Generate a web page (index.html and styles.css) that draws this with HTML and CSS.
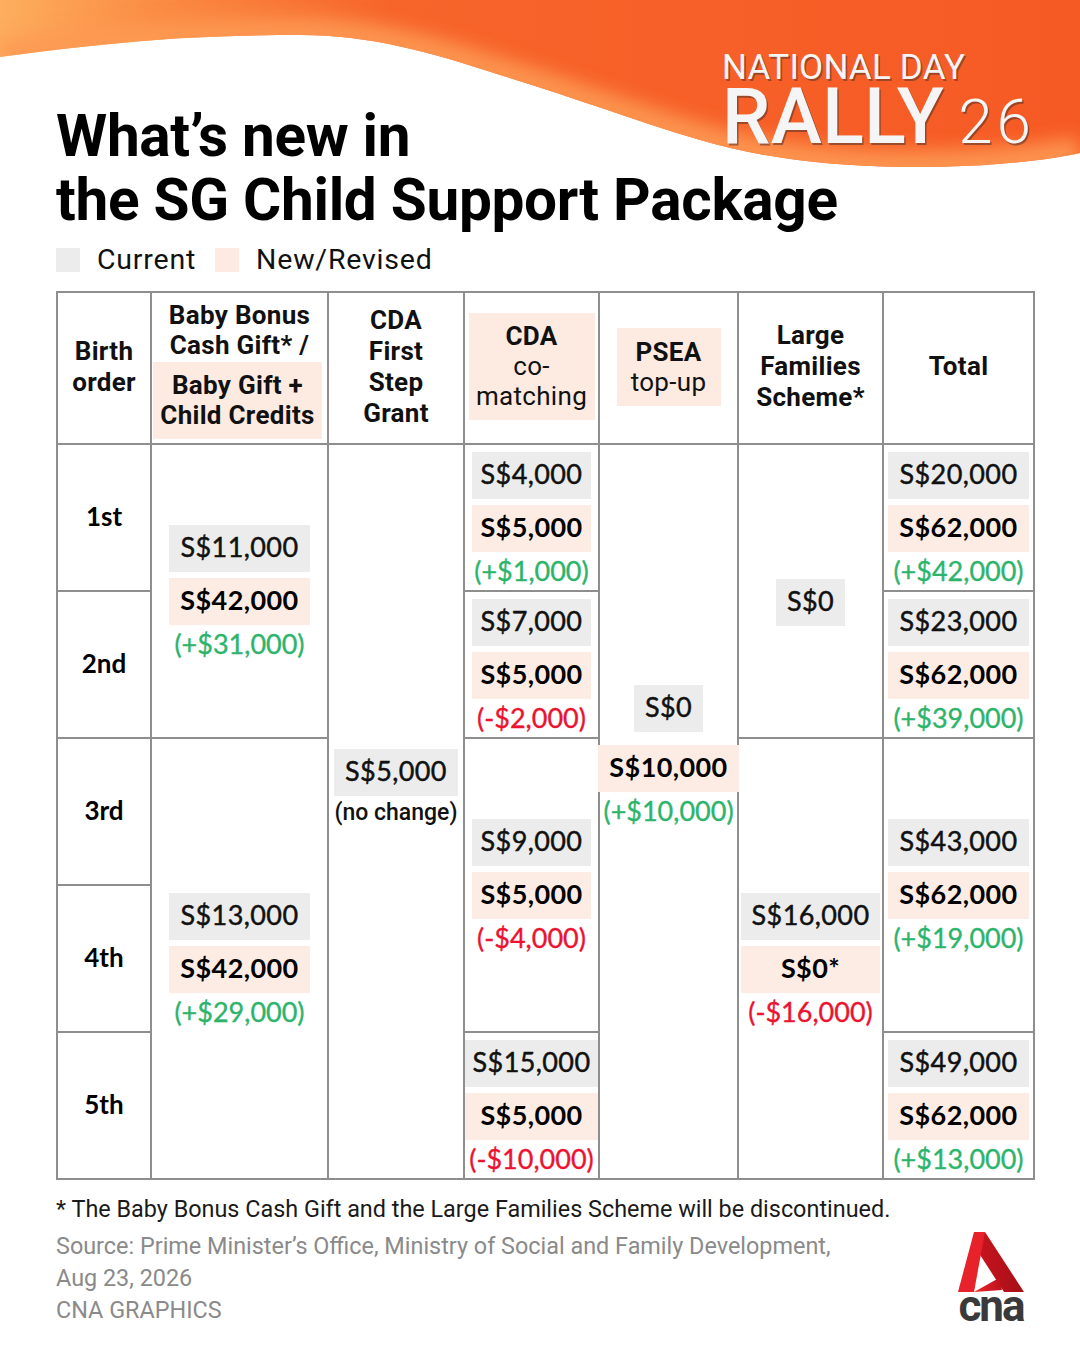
FILE: index.html
```html
<!DOCTYPE html>
<html lang="en">
<head>
<meta charset="utf-8">
<title>What’s new in the SG Child Support Package</title>
<link rel="stylesheet" href="styles.css">
</head>
<body>
<div class="page">
  <svg class="wave" width="1080" height="175" viewBox="0 0 1080 175" aria-hidden="true">
    <defs>
      <linearGradient id="gA" x1="0" y1="0" x2="1" y2="0">
        <stop offset="0" stop-color="#fdae5e"/>
        <stop offset="0.14" stop-color="#fb8d45"/>
        <stop offset="0.36" stop-color="#f7652b"/>
        <stop offset="1" stop-color="#f65a24"/>
      </linearGradient>
      <clipPath id="cw">
        <path d="M0,0 H1080 V153 C1040,162 970,168 900,167 C830,166 760,158 700,140 C630,119 570,96 500,75 C430,52 370,35 300,35 C230,35 160,38 100,45 C60,49 30,53 0,57 Z"/>
      </clipPath>
      <filter id="bl" x="-10%" y="-50%" width="120%" height="200%">
        <feGaussianBlur stdDeviation="9"/>
      </filter>
    </defs>
    <path d="M0,0 H1080 V153 C1040,162 970,168 900,167 C830,166 760,158 700,140 C630,119 570,96 500,75 C430,52 370,35 300,35 C230,35 160,38 100,45 C60,49 30,53 0,57 Z" fill="url(#gA)"/>
    <g clip-path="url(#cw)">
      <path d="M1080,153 C1040,162 970,168 900,167 C830,166 760,158 700,140 C630,119 570,96 500,75 C430,52 370,35 300,35 C230,35 160,38 100,45 C60,49 30,53 0,57" fill="none" stroke="#fd9a52" stroke-width="34" filter="url(#bl)" opacity="0.9"/>
    </g>
  </svg>

  <div class="ndr">
    <div class="ndr-top">NATIONAL DAY</div>
    <div class="ndr-row"><span class="ndr-rally">RALLY</span><span class="ndr-num">26</span></div>
  </div>

  <h1 class="title">What’s new in<br>the SG Child Support Package</h1>

  <div class="legend">
    <span class="sw sw-cur"></span><span class="lg-text">Current</span>
    <span class="sw sw-new"></span><span class="lg-text">New/Revised</span>
  </div>

  <div class="grid">
    <!-- header -->
    <div class="cell hd">Birth<br>order</div>
    <div class="cell hd hd-bb">
      <div>Baby Bonus<br>Cash Gift* /</div>
      <div class="hbox hbox-bb">Baby Gift +<br>Child Credits</div>
    </div>
    <div class="cell hd">CDA<br>First<br>Step<br>Grant</div>
    <div class="cell hd">
      <div class="hbox hbox-co">CDA<br><span class="reg">co-<br>matching</span></div>
    </div>
    <div class="cell hd">
      <div class="hbox hbox-psea">PSEA<br><span class="reg">top-up</span></div>
    </div>
    <div class="cell hd">Large<br>Families<br>Scheme*</div>
    <div class="cell hd">Total</div>

    <!-- birth order -->
    <div class="cell ord r1">1st</div>
    <div class="cell ord r2">2nd</div>
    <div class="cell ord r3">3rd</div>
    <div class="cell ord r4">4th</div>
    <div class="cell ord r5">5th</div>

    <!-- Baby bonus -->
    <div class="cell c2 r12">
      <div class="stack">
        <div class="pill cur">S$11,000</div>
        <div class="pill new">S$42,000</div>
        <div class="chg up">(+$31,000)</div>
      </div>
    </div>
    <div class="cell c2 r345">
      <div class="stack">
        <div class="pill cur">S$13,000</div>
        <div class="pill new">S$42,000</div>
        <div class="chg up">(+$29,000)</div>
      </div>
    </div>

    <!-- CDA first step -->
    <div class="cell c3 rall fsg">
      <div class="stack">
        <div class="pill cur">S$5,000</div>
        <div class="nochg">(no change)</div>
      </div>
    </div>

    <!-- CDA co-matching -->
    <div class="cell c4 r1">
      <div class="stack">
        <div class="pill cur">S$4,000</div>
        <div class="pill new">S$5,000</div>
        <div class="chg up">(+$1,000)</div>
      </div>
    </div>
    <div class="cell c4 r2">
      <div class="stack">
        <div class="pill cur">S$7,000</div>
        <div class="pill new">S$5,000</div>
        <div class="chg down">(-$2,000)</div>
      </div>
    </div>
    <div class="cell c4 r34">
      <div class="stack">
        <div class="pill cur">S$9,000</div>
        <div class="pill new">S$5,000</div>
        <div class="chg down">(-$4,000)</div>
      </div>
    </div>
    <div class="cell c4 r5">
      <div class="stack">
        <div class="pill cur">S$15,000</div>
        <div class="pill new">S$5,000</div>
        <div class="chg down">(-$10,000)</div>
      </div>
    </div>

    <!-- PSEA -->
    <div class="cell c5 rall psea">
      <div class="stack stack-c">
        <div class="pill cur">S$0</div>
        <div class="pill new">S$10,000</div>
        <div class="chg up">(+$10,000)</div>
      </div>
    </div>

    <!-- Large families -->
    <div class="cell c6 r12 lfs1">
      <div class="stack">
        <div class="pill cur">S$0</div>
      </div>
    </div>
    <div class="cell c6 r345">
      <div class="stack">
        <div class="pill cur">S$16,000</div>
        <div class="pill new">S$0*</div>
        <div class="chg down">(-$16,000)</div>
      </div>
    </div>

    <!-- Total -->
    <div class="cell c7 r1">
      <div class="stack">
        <div class="pill cur">S$20,000</div>
        <div class="pill new">S$62,000</div>
        <div class="chg up">(+$42,000)</div>
      </div>
    </div>
    <div class="cell c7 r2">
      <div class="stack">
        <div class="pill cur">S$23,000</div>
        <div class="pill new">S$62,000</div>
        <div class="chg up">(+$39,000)</div>
      </div>
    </div>
    <div class="cell c7 r34">
      <div class="stack">
        <div class="pill cur">S$43,000</div>
        <div class="pill new">S$62,000</div>
        <div class="chg up">(+$19,000)</div>
      </div>
    </div>
    <div class="cell c7 r5">
      <div class="stack">
        <div class="pill cur">S$49,000</div>
        <div class="pill new">S$62,000</div>
        <div class="chg up">(+$13,000)</div>
      </div>
    </div>
  </div>

  <footer class="foot">
    <div class="foot-text">
      <p class="note">* The Baby Bonus Cash Gift and the Large Families Scheme will be discontinued.</p>
      <p class="src">Source: Prime Minister’s Office, Ministry of Social and Family Development,<br>Aug 23, 2026<br>CNA GRAPHICS</p>
    </div>
    <div class="cna">
      <svg class="cna-a" width="66" height="60" viewBox="0 0 66 60" aria-hidden="true">
        <defs>
          <linearGradient id="rl" x1="0" y1="0" x2="1" y2="0">
            <stop offset="0" stop-color="#c8141d"/>
            <stop offset="1" stop-color="#a50f18"/>
          </linearGradient>
          <linearGradient id="rb" x1="0" y1="0" x2="1" y2="0">
            <stop offset="0" stop-color="#f0262e"/>
            <stop offset="1" stop-color="#b8121b"/>
          </linearGradient>
        </defs>
        <polygon points="19,0 27,0 66,60 46,60 21.5,22" fill="url(#rl)"/>
        <polygon points="0,60 16,0 27,0 16,60" fill="#e8222a"/>
        <polygon points="16,60 41,46 44,58" fill="url(#rb)"/>
      </svg>
      <div class="cna-word">cna</div>
    </div>
  </footer>
</div>
</body>
</html>
```

FILE: styles.css
```css
* { box-sizing: border-box; }

html, body {
  margin: 0;
  padding: 0;
  background: #ffffff;
}

.page {
  position: relative;
  width: 1080px;
  height: 1350px;
  padding: 0 45px 0 56px;
  overflow: hidden;
  font-family: Roboto, "Liberation Sans", sans-serif;
  color: #000;
}

.wave {
  position: absolute;
  left: 0;
  top: 0;
  display: block;
}

.ndr {
  position: absolute;
  left: 722px;
  top: 50px;
  color: #f5f5f5;
  font-family: Roboto, "Liberation Sans", sans-serif;
  text-shadow: 1.5px 1.5px 0 rgba(80, 50, 40, 0.55);
}

.ndr-top {
  font-size: 35px;
  line-height: 35px;
  font-weight: 400;
  letter-spacing: 0.2px;
}

.ndr-row {
  display: flex;
  align-items: baseline;
  margin-top: 2px;
  line-height: 60px;
}

.ndr-rally {
  font-size: 77px;
  font-weight: 500;
  letter-spacing: 0.4px;
}

.ndr-num {
  font-size: 62px;
  font-weight: 300;
  margin-left: 14px;
  letter-spacing: 4px;
}

.title {
  position: relative;
  margin: 104px 0 0 0;
  font-size: 58.5px;
  line-height: 64px;
  font-weight: 700;
  letter-spacing: -0.3px;
}

.legend {
  display: flex;
  align-items: center;
  height: 24px;
  margin-top: 16px;
}

.sw {
  width: 24px;
  height: 24px;
  display: block;
}

.sw-cur { background: #ececec; }
.sw-new { background: #fdebe1; margin-left: 19px; }

.lg-text {
  font-size: 28.5px;
  line-height: 24px;
  margin-left: 17px;
  letter-spacing: 0.8px;
  color: #111;
}

.grid {
  display: grid;
  grid-template-columns: 92px 175px 134px 133px 137px 143px 149px;
  grid-template-rows: 150px repeat(5, 145px);
  gap: 2px;
  padding: 2px;
  background: #8e8e8e;
  width: 979px;
  margin-top: 19px;
}

.cell {
  background: #fff;
  display: flex;
  align-items: center;
  justify-content: center;
  text-align: center;
  min-width: 0;
}

.hd {
  font-size: 26px;
  line-height: 31px;
  font-weight: 700;
  letter-spacing: 0.3px;
  color: #111;
  flex-direction: column;
  padding-bottom: 3px;
}

.hd-bb {
  justify-content: center;
  gap: 2px;
  line-height: 30px;
  padding-top: 2px;
  padding-bottom: 0;
}

.hbox {
  background: #fdebe1;
  line-height: 30px;
}

.hbox-bb {
  width: 169px;
  margin-left: -4px;
  padding: 8px 0 9px;
}

.hbox-co {
  width: 126px;
  padding: 8px 0 9px;
}

.hbox-psea {
  width: 104px;
  padding: 9px 0;
}

.reg { font-weight: 400; }

.ord {
  font-family: Lato, Roboto, sans-serif;
  font-size: 26px;
  font-weight: 700;
  grid-column: 1;
  padding-bottom: 4px;
}

.r1 { grid-row: 2; }
.r2 { grid-row: 3; }
.r3 { grid-row: 4; }
.r4 { grid-row: 5; }
.r5 { grid-row: 6; }
.r12 { grid-row: 2 / 4; }
.r34 { grid-row: 4 / 6; }
.r345 { grid-row: 4 / 7; }
.rall { grid-row: 2 / 7; }

.c2 { grid-column: 2; }
.c3 { grid-column: 3; }
.c4 { grid-column: 4; }
.c5 { grid-column: 5; }
.c6 { grid-column: 6; }
.c7 { grid-column: 7; }

.stack {
  display: inline-flex;
  flex-direction: column;
  align-items: stretch;
  gap: 6px;
  font-family: Lato, Roboto, sans-serif;
  font-size: 27px;
}

.stack-c {
  align-items: center;
  gap: 13px;
}

.stack-c .chg { margin-top: -7px; }

.pill {
  height: 47px;
  line-height: 43px;
  padding: 0 11px;
  letter-spacing: 0.4px;
  white-space: nowrap;
}

.c4 .pill { padding: 0 8px; }

.cur {
  background: #ececec;
  font-weight: 400;
  color: #111;
  -webkit-text-stroke: 0.45px #111;
}

.new {
  background: #fdece3;
  font-weight: 700;
  color: #000;
}

.chg {
  line-height: 26px;
  white-space: nowrap;
  letter-spacing: 0;
  -webkit-text-stroke: 0.35px currentColor;
}

.up { color: #2db46c; }
.down { color: #ec1331; }

.nochg {
  font-family: Roboto, sans-serif;
  font-size: 23px;
  font-weight: 500;
  letter-spacing: 0;
  line-height: 34px;
  margin-top: -6px;
  color: #111;
}

.fsg { padding-bottom: 44px; }
.psea { padding-bottom: 114px; }
.lfs1 { padding-top: 22px; }

.foot {
  display: flex;
  justify-content: space-between;
  align-items: flex-end;
  margin-top: 13px;
  padding-right: 11px;
}

.foot-text p {
  margin: 0;
  font-size: 23.4px;
  line-height: 32px;
}

.note { color: #1a1a1a; }

.src {
  color: #8a8a8a;
  margin-top: 5px !important;
}

.cna {
  display: flex;
  flex-direction: column;
  align-items: center;
  width: 66px;
  margin-bottom: 4px;
}

.cna-a { display: block; }

.cna-word {
  font-family: Roboto, sans-serif;
  font-weight: 700;
  font-size: 44px;
  line-height: 28px;
  height: 30px;
  letter-spacing: -2px;
  color: #3a3a3a;
}
```
